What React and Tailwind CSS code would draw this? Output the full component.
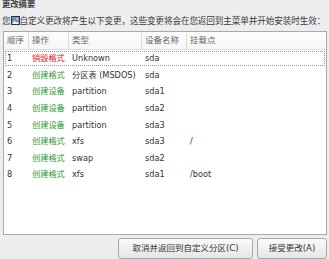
import React from 'react'

const rows = [
  { n: '1', op: '销毁格式', red: true, type: 'Unknown', dev: 'sda', mount: '' },
  { n: '2', op: '创建格式', type: '分区表 (MSDOS)', dev: 'sda', mount: '' },
  { n: '3', op: '创建设备', type: 'partition', dev: 'sda1', mount: '' },
  { n: '4', op: '创建设备', type: 'partition', dev: 'sda2', mount: '' },
  { n: '5', op: '创建设备', type: 'partition', dev: 'sda3', mount: '' },
  { n: '6', op: '创建格式', type: 'xfs', dev: 'sda3', mount: '/' },
  { n: '7', op: '创建格式', type: 'swap', dev: 'sda2', mount: '' },
  { n: '8', op: '创建格式', type: 'xfs', dev: 'sda1', mount: '/boot' },
]

const headers = ['顺序', '操作', '类型', '设备名称', '挂载点']

const cols = 'grid grid-cols-[25px_40px_73px_45px_1fr]'

// little picture icon after 您
const PicIcon = () => (
  <svg width="9" height="9" viewBox="0 0 9 9" className="inline-block -mt-[2px] align-middle">
    <rect x="0" y="0" width="9" height="9" fill="#2e3440" />
    <rect x="1" y="1" width="7" height="7" fill="#6f8fb8" />
    <path d="M1 8 L3.5 4.5 L5.5 6.5 L6.5 5.5 L8 8 Z" fill="#f0f0f0" />
    <circle cx="6.2" cy="2.8" r="0.9" fill="#f0f0f0" />
  </svg>
)

const App = () => {
  return (
    <div
      className="w-[329px] h-[259px] bg-[#ededed] overflow-hidden flex flex-col text-[#333]"
      style={{ fontFamily: '"DejaVu Sans", "Noto Sans CJK SC", sans-serif' }}
    >
      <div className="-mt-[2px] pl-[2px] h-[12px] text-[8.3px] leading-[12px] font-bold text-[#3a3a3a]">更改摘要</div>

      <div className="mt-[5px] pl-[2px] h-[12px] text-[8.6px] tracking-[-0.1px] leading-[12px] whitespace-nowrap text-[#3a3a3a]">
        您<PicIcon />自定义更改将产生以下变更，这些变更将会在您返回到主菜单并开始安装时生效：
      </div>

      <div className="mt-[4px] ml-[3px] mr-[2px] h-[204px] border border-[#a9a9a9] bg-white flex flex-col">
        <div className={`${cols} h-[18px] border-b border-[#dcdcdc] bg-gradient-to-b from-[#fdfdfd] to-[#f6f6f6] text-[8.5px] text-[#666]`}>
          {headers.map((h, i) => (
            <div
              key={h}
              className={`pl-[3px] flex items-center ${i < 4 ? 'border-r border-[#dcdcdc]' : ''}`}
            >
              {h}
            </div>
          ))}
        </div>

        {rows.map((r, i) => (
          <div
            key={r.n}
            className={`${cols} h-[16.6px] text-[8.2px] items-center ${i === 0 ? 'outline outline-1 outline-dotted outline-[#9a9a9a] -outline-offset-2' : ''}`}
          >
            <div className="pl-[3px]">{r.n}</div>
            <div className={`pl-[3px] ${r.red ? 'text-[#e8141c]' : 'text-[#2e9a2e]'}`}>{r.op}</div>
            <div className="pl-[3px] whitespace-nowrap">{r.type}</div>
            <div className="pl-[3px]">{r.dev}</div>
            <div className="pl-[3px]">{r.mount}</div>
          </div>
        ))}
      </div>

      <div className="mt-[3px] pr-[2px] flex justify-end gap-[4px]">
        <button className="w-[135px] h-[21px] rounded-[3px] border border-[#a8a8a8] bg-gradient-to-b from-[#fafafa] to-[#e6e6e6] text-[8.5px] text-[#333]">
          取消并返回到自定义分区(C)
        </button>
        <button className="w-[70px] h-[21px] rounded-[3px] border border-[#a8a8a8] bg-gradient-to-b from-[#fafafa] to-[#e6e6e6] text-[8.5px] text-[#333]">
          接受更改(A)
        </button>
      </div>
    </div>
  )
}

export default App
